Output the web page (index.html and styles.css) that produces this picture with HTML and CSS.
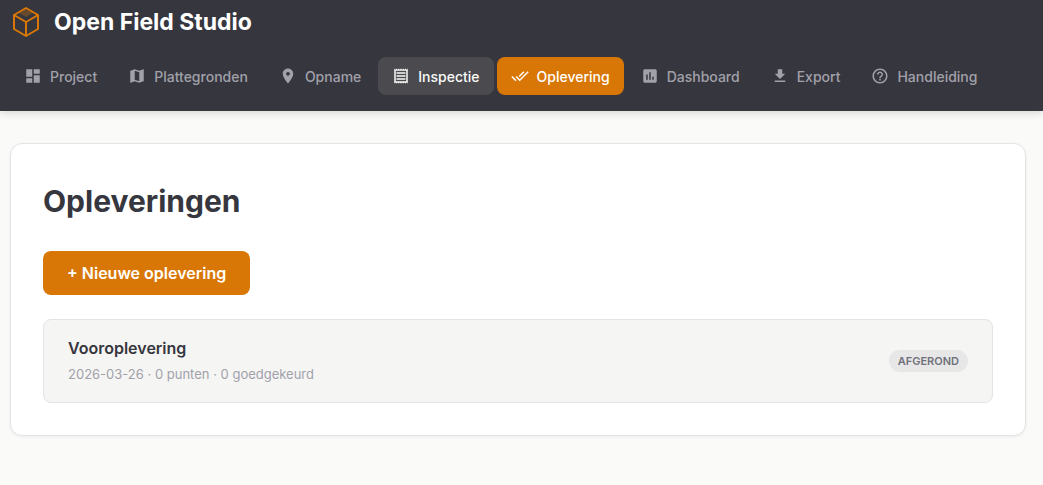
FILE: index.html
```
<!DOCTYPE html>
<html lang="nl">
  <head>
    <meta charset="UTF-8" />
    <meta name="viewport" content="width=device-width, initial-scale=1.0" />
    <title>Open Field Studio</title>
    <link rel="stylesheet" href="styles.css">
  </head>
  <body>
    <header class="header">
      <div class="brand">
        <svg class="brand-logo" viewBox="0 0 32 32">
          <path class="logo-shade" d="M16 3l7 4-7 4-7-4z" />
          <path d="M16 2l12 7v14l-12 7-12-7V9z" />
          <path d="M4 9l12 7 12-7M16 16v14" />
        </svg>
        <span class="brand-name">Open Field Studio</span>
      </div>
      <nav class="nav">
        <a class="nav-item" href="#">
          <svg class="nav-icon" viewBox="0 0 24 24"><path d="M3 13h8V3H3v10zm0 8h8v-6H3v6zm10 0h8V11h-8v10zm0-18v6h8V3h-8z" /></svg>
          <span>Project</span>
        </a>
        <a class="nav-item" href="#">
          <svg class="nav-icon" viewBox="0 0 24 24"><path d="M20.5 3l-.16.03L15 5.1 9 3 3.36 4.9c-.21.07-.36.25-.36.48V20.5c0 .28.22.5.5.5l.16-.03L9 18.9l6 2.1 5.64-1.9c.21-.07.36-.25.36-.48V3.5c0-.28-.22-.5-.5-.5zM15 19l-6-2.11V5l6 2.11V19z" /></svg>
          <span>Plattegronden</span>
        </a>
        <a class="nav-item" href="#">
          <svg class="nav-icon" viewBox="0 0 24 24"><path d="M12 2C8.13 2 5 5.13 5 9c0 5.25 7 13 7 13s7-7.75 7-13c0-3.87-3.13-7-7-7zm0 9.5c-1.38 0-2.5-1.12-2.5-2.5s1.12-2.5 2.5-2.5 2.5 1.12 2.5 2.5-1.12 2.5-2.5 2.5z" /></svg>
          <span>Opname</span>
        </a>
        <a class="nav-item hover" href="#">
          <svg class="nav-icon" viewBox="0 0 24 24"><path d="M19.5 3.5L18 2l-1.5 1.5L15 2l-1.5 1.5L12 2l-1.5 1.5L9 2 7.5 3.5 6 2 4.5 3.5 3 2v20l1.5-1.5L6 22l1.5-1.5L9 22l1.5-1.5L12 22l1.5-1.5L15 22l1.5-1.5L18 22l1.5-1.5L21 22V2l-1.5 1.5zM19 19.09H5V4.91h14v14.18zM6 15h12v2H6zm0-4h12v2H6zm0-4h12v2H6z" /></svg>
          <span>Inspectie</span>
        </a>
        <a class="nav-item active" href="#">
          <svg class="nav-icon" viewBox="0 0 24 24"><path d="M18 7l-1.41-1.41-6.34 6.34 1.41 1.41L18 7zm4.24-1.41L11.66 16.17 7.48 12l-1.41 1.41L11.66 19l12-12-1.42-1.41zM.41 13.41L6 19l1.41-1.41L1.83 12 .41 13.41z" /></svg>
          <span>Oplevering</span>
        </a>
        <a class="nav-item" href="#">
          <svg class="nav-icon" viewBox="0 0 24 24"><path d="M19 3H5c-1.1 0-2 .9-2 2v14c0 1.1.9 2 2 2h14c1.1 0 2-.9 2-2V5c0-1.1-.9-2-2-2zM9 17H7v-7h2v7zm4 0h-2V7h2v10zm4 0h-2v-4h2v4z" /></svg>
          <span>Dashboard</span>
        </a>
        <a class="nav-item" href="#">
          <svg class="nav-icon" viewBox="0 0 24 24"><path d="M19 9h-4V3H9v6H5l7 7 7-7zM5 18v2h14v-2H5z" /></svg>
          <span>Export</span>
        </a>
        <a class="nav-item" href="#">
          <svg class="nav-icon" viewBox="0 0 24 24"><path d="M11 18h2v-2h-2v2zm1-16C6.48 2 2 6.48 2 12s4.48 10 10 10 10-4.48 10-10S17.52 2 12 2zm0 18c-4.41 0-8-3.59-8-8s3.59-8 8-8 8 3.59 8 8-3.59 8-8 8zm0-14c-2.21 0-4 1.79-4 4h2c0-1.1.9-2 2-2s2 .9 2 2c0 2-3 1.75-3 5h2c0-2.25 3-2.5 3-5 0-2.21-1.79-4-4-4z" /></svg>
          <span>Handleiding</span>
        </a>
      </nav>
    </header>

    <main class="card">
      <h1>Opleveringen</h1>
      <button class="btn-primary" type="button">+ Nieuwe oplevering</button>
      <div class="list-item">
        <div>
          <div class="item-title">Vooroplevering</div>
          <div class="item-meta">2026-03-26 · 0 punten · 0 goedgekeurd</div>
        </div>
        <span class="badge">AFGEROND</span>
      </div>
    </main>
  </body>
</html>
```
FILE: styles.css
```
* {
  box-sizing: border-box;
}

body {
  margin: 0;
  background: #fafaf9;
  color: #36363e;
  font-family: Inter, "Liberation Sans", sans-serif;
}

.header {
  padding: 4px 10px 16px;
  background: #36363e;
  box-shadow: 0 2px 8px rgba(0, 0, 0, 0.15);
}

.brand {
  display: flex;
  align-items: center;
  gap: 12px;
  height: 36px;
  margin-bottom: 17px;
}

.brand-logo {
  width: 32px;
  height: 32px;
  fill: none;
  stroke: #d97706;
  stroke-width: 2;
  stroke-linejoin: round;
}

.brand-logo .logo-shade {
  fill: #d97706;
  stroke: none;
  opacity: 0.3;
}

.brand-name {
  color: #fff;
  font-size: 23px;
  font-weight: 700;
}

.nav {
  display: flex;
  gap: 3px;
}

.nav-item {
  display: flex;
  align-items: center;
  gap: 8px;
  height: 38px;
  padding: 0 14px;
  border-radius: 8px;
  color: #a1a1aa;
  font-size: 14px;
  font-weight: 500;
  text-decoration: none;
  white-space: nowrap;
}

.nav-item.hover {
  background: #4a4a4f;
  color: #fafaf9;
}

.nav-item.active {
  background: #d97706;
  color: #fff;
}

.nav-icon {
  width: 18px;
  height: 18px;
  fill: currentColor;
}

.card {
  margin: 32px 17px 32px 10px;
  padding: 32px;
  background: #fff;
  border: 1px solid #e4e4e7;
  border-radius: 12px;
  box-shadow: 0 1px 3px rgba(0, 0, 0, 0.06);
}

h1 {
  margin: 5px 0 30px;
  font-size: 30px;
  line-height: 40px;
  font-weight: 700;
}

.btn-primary {
  display: block;
  height: 44px;
  margin-bottom: 24px;
  padding: 0 24px;
  border: none;
  border-radius: 8px;
  background: #d97706;
  color: #fff;
  font-family: inherit;
  font-size: 16px;
  font-weight: 600;
  cursor: pointer;
}

.list-item {
  display: flex;
  align-items: center;
  justify-content: space-between;
  padding: 16px 24px;
  background: #f5f5f4;
  border: 1px solid #e4e4e7;
  border-radius: 8px;
}

.item-title {
  margin-bottom: 2px;
  font-size: 16px;
  line-height: 24px;
  font-weight: 600;
}

.item-meta {
  color: #a1a1aa;
  font-size: 13px;
  line-height: 24px;
}

.badge {
  padding: 0 9px;
  border-radius: 11px;
  background: #e7e7e8;
  color: #71717a;
  font-size: 11px;
  line-height: 22px;
  font-weight: 600;
}
```
